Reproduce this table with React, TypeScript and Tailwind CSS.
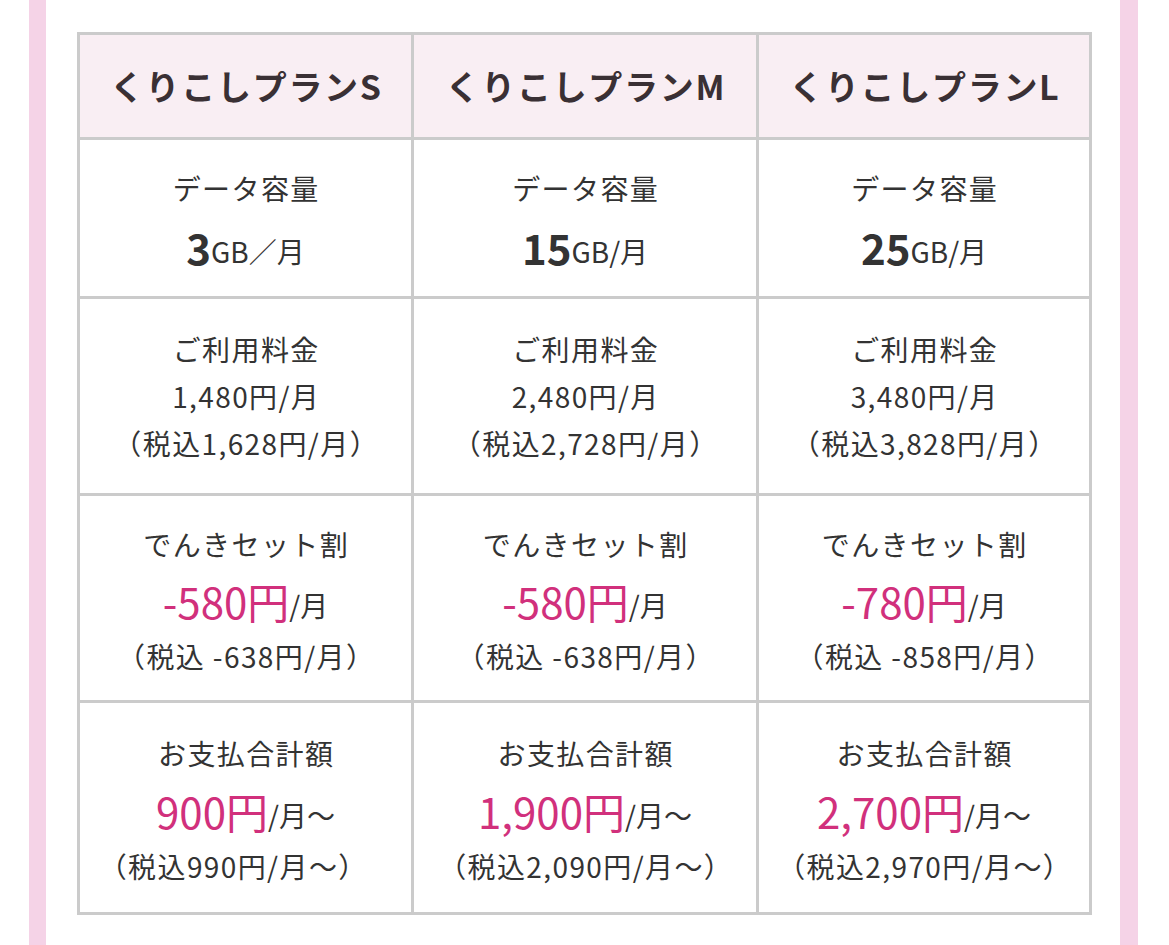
import React from "react";

const font = { fontFamily: '"Noto Sans CJK JP", "Noto Sans", sans-serif' };

type Plan = {
  name: string;
  dataBig: string;
  dataUnit: string;
  fee: string;
  feeTax: string;
  discBig: string;
  discTax: string;
  totalBig: string;
  totalTax: string;
  totalTaxPad: string;
};

const plans: Plan[] = [
  {
    name: "くりこしプランS",
    dataBig: "3",
    dataUnit: "GB／月",
    fee: "1,480円/月",
    feeTax: "（税込1,628円/月）",
    discBig: "-580円",
    discTax: "（税込 -638円/月）",
    totalBig: "900円",
    totalTax: "（税込990円/月〜）",
    totalTaxPad: "pr-[26px]",
  },
  {
    name: "くりこしプランM",
    dataBig: "15",
    dataUnit: "GB/月",
    fee: "2,480円/月",
    feeTax: "（税込2,728円/月）",
    discBig: "-580円",
    discTax: "（税込 -638円/月）",
    totalBig: "1,900円",
    totalTax: "（税込2,090円/月〜）",
    totalTaxPad: "",
  },
  {
    name: "くりこしプランL",
    dataBig: "25",
    dataUnit: "GB/月",
    fee: "3,480円/月",
    feeTax: "（税込3,828円/月）",
    discBig: "-780円",
    discTax: "（税込 -858円/月）",
    totalBig: "2,700円",
    totalTax: "（税込2,970円/月〜）",
    totalTaxPad: "",
  },
];

function Line({ children, extra = "" }: { children: React.ReactNode; extra?: string }) {
  return (
    <div
      className={
        "text-[28px] leading-[47px] tracking-[0.05em] pl-[0.05em] text-[#333] " + extra
      }
    >
      {children}
    </div>
  );
}

function Cell({
  children,
  header,
  extra = "",
}: {
  children: React.ReactNode;
  header?: boolean;
  extra?: string;
}) {
  return (
    <div
      className={
        "flex flex-col items-center justify-center text-center " +
        (header ? "bg-[#f9eef3] " : "bg-white ") +
        extra
      }
    >
      {children}
    </div>
  );
}

export default function App() {
  return (
    <div className="w-[1169px] h-[945px] bg-white flex overflow-hidden" style={font}>
      <div className="w-[29px] shrink-0" />
      <div className="w-[17px] shrink-0 bg-[#f5d3e7]" />
      <div className="w-[1074px] shrink-0 pl-[31px] pt-[32px]">
        <div className="grid grid-cols-[331px_342px_330px] grid-rows-[102px_156px_194px_204px_209px] gap-[3px] p-[3px] bg-[#cbcbcb] w-[1015px]">
          {plans.map((p) => (
            <Cell key={p.name + "h"} header>
              <div className="text-[34px] font-bold tracking-[0.05em] pl-[0.05em] text-[#3a3034] leading-none">
                {p.name}
              </div>
            </Cell>
          ))}
          {plans.map((p) => (
            <Cell key={p.name + "d"}>
              <Line>データ容量</Line>
              <div className="h-[60px] flex items-end justify-center text-[#333] pb-[4px]">
                <span className="text-[42px] font-bold leading-none">{p.dataBig}</span>
                <span className="text-[28px] leading-none pb-[3px]">{p.dataUnit}</span>
              </div>
            </Cell>
          ))}
          {plans.map((p) => (
            <Cell key={p.name + "f"}>
              <Line>ご利用料金</Line>
              <Line>{p.fee}</Line>
              <Line>{p.feeTax}</Line>
            </Cell>
          ))}
          {plans.map((p) => (
            <Cell key={p.name + "s"} extra="pt-[4px]">
              <Line>でんきセット割</Line>
              <div className="h-[65px] flex items-end justify-center pb-[11px]">
                <span className="text-[42px] leading-none text-[#d1307c]">{p.discBig}</span>
                <span className="text-[28px] leading-none text-[#333] pb-[3px]">/月</span>
              </div>
              <Line>{p.discTax}</Line>
            </Cell>
          ))}
          {plans.map((p) => (
            <Cell key={p.name + "t"} extra="pt-[4px]">
              <Line>お支払合計額</Line>
              <div className="h-[66px] flex items-end justify-center pb-[11px]">
                <span className="text-[42px] leading-none text-[#d1307c]">{p.totalBig}</span>
                <span className="text-[28px] leading-none text-[#333] pb-[3px]">/月〜</span>
              </div>
              <Line extra={p.totalTaxPad}>{p.totalTax}</Line>
            </Cell>
          ))}
        </div>
      </div>
      <div className="w-[18px] shrink-0 bg-[#f5d3e7]" />
      <div className="flex-1" />
    </div>
  );
}
